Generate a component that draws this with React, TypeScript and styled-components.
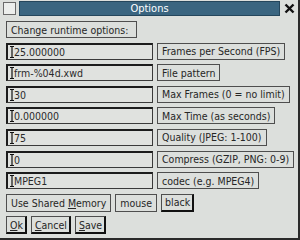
import React from "react";
import styled, { createGlobalStyle } from "styled-components";

const Global = createGlobalStyle`
  html, body { margin: 0; padding: 0; background: #dcdfdc; }
  body {
    font-family: "DejaVu Sans", "Liberation Sans", sans-serif;
    font-stretch: condensed;
  }
`;

const Win = styled.div`
  width: 300px;
  height: 240px;
  box-sizing: border-box;
  background: #dcdfdc;
  border-right: 2px solid #2a2a2a;
  border-bottom: 2px solid #2a2a2a;
  display: flex;
  flex-direction: column;
`;

const TitleBar = styled.div`
  height: 16px;
  display: flex;
  align-items: center;
  gap: 3px;
  padding: 0 2px 0 3px;
`;

const MenuBox = styled.div`
  width: 11px;
  height: 11px;
  background: #eceeec;
  border: 1px solid #6a6a6a;
`;

const Caption = styled.div`
  flex: 1;
  height: 13px;
  background: #3a6580;
  border: 1px solid #24465c;
  color: #fff;
  font-size: 11px;
  line-height: 13px;
  text-align: center;
`;

const Close = styled.div`
  width: 13px;
  height: 13px;
  display: flex;
  align-items: center;
  justify-content: center;
`;

const Body = styled.div`
  display: flex;
  flex-direction: column;
  gap: 4.6px;
  padding: 5px 0 0 6px;
`;

const Row = styled.div<{ $tall?: boolean }>`
  display: flex;
  gap: 4px;
  height: ${(p) => (p.$tall ? 18 : 17)}px;
`;

const Box = styled.div<{ $heavy?: boolean; $wide?: boolean }>`
  box-sizing: border-box;
  height: 100%;
  display: flex;
  align-items: center;
  padding: 0 ${(p) => (p.$wide ? 8 : 4)}px 0 4px;
  background: #dcdfdc;
  color: #262626;
  font-size: 10.5px;
  white-space: nowrap;
  border: 1px solid #4e4e4e;
  ${(p) =>
    p.$heavy &&
    `border-right: 2px solid #111; border-bottom: 2px solid #111; padding: 0 2px 0 3px;`}
`;

const Field = styled.div`
  box-sizing: border-box;
  width: 147px;
  height: 17px;
  display: flex;
  align-items: center;
  padding-left: 2px;
  background: #e0e2df;
  color: #2a2a2a;
  font-size: 10.5px;
  border-top: 2px solid #1c1c1c;
  border-left: 2px solid #1c1c1c;
  border-right: 1px solid #3a3a3a;
  border-bottom: 1px solid #3a3a3a;
`;

const Key = styled.span`
  text-decoration: underline;
`;

const Caret = () => (
  <svg width="4" height="12" viewBox="0 0 4 12">
    <path d="M0 0.5H4M2 0.5V11.5M0 11.5H4" stroke="#111" strokeWidth="1.2" fill="none" />
  </svg>
);

const Input = ({ value }: { value: string }) => (
  <Field>
    <Caret />
    <span>{value}</span>
  </Field>
);

const rows: [string, string][] = [
  ["25.000000", "Frames per Second (FPS)"],
  ["frm-%04d.xwd", "File pattern"],
  ["30", "Max Frames (0 = no limit)"],
  ["0.000000", "Max Time (as seconds)"],
  ["75", "Quality (JPEG: 1-100)"],
  ["0", "Compress (GZIP, PNG: 0-9)"],
  ["MPEG1", "codec (e.g. MPEG4)"],
];

export default function App() {
  return (
    <Win>
      <Global />
      <TitleBar>
        <MenuBox />
        <Caption>Options</Caption>
        <Close>
          <svg width="11" height="11" viewBox="0 0 11 11">
            <path d="M1.5 1.5L9.5 9.5M9.5 1.5L1.5 9.5" stroke="#111" strokeWidth="2.4" />
          </svg>
        </Close>
      </TitleBar>
      <Body>
        <Row>
          <Box $wide>Change runtime options:</Box>
        </Row>
        {rows.map(([v, l]) => (
          <Row key={l}>
            <Input value={v} />
            <Box>{l}</Box>
          </Row>
        ))}
        <Row $tall>
          <Box>
            Use Shared&nbsp;<Key>M</Key>emory
          </Box>
          <Box>mouse</Box>
          <Box $heavy>black</Box>
        </Row>
        <Row $tall>
          <Box $heavy>
            <Key>O</Key>k
          </Box>
          <Box $heavy>
            <Key>C</Key>ancel
          </Box>
          <Box $heavy>
            <Key>S</Key>ave
          </Box>
        </Row>
      </Body>
    </Win>
  );
}
